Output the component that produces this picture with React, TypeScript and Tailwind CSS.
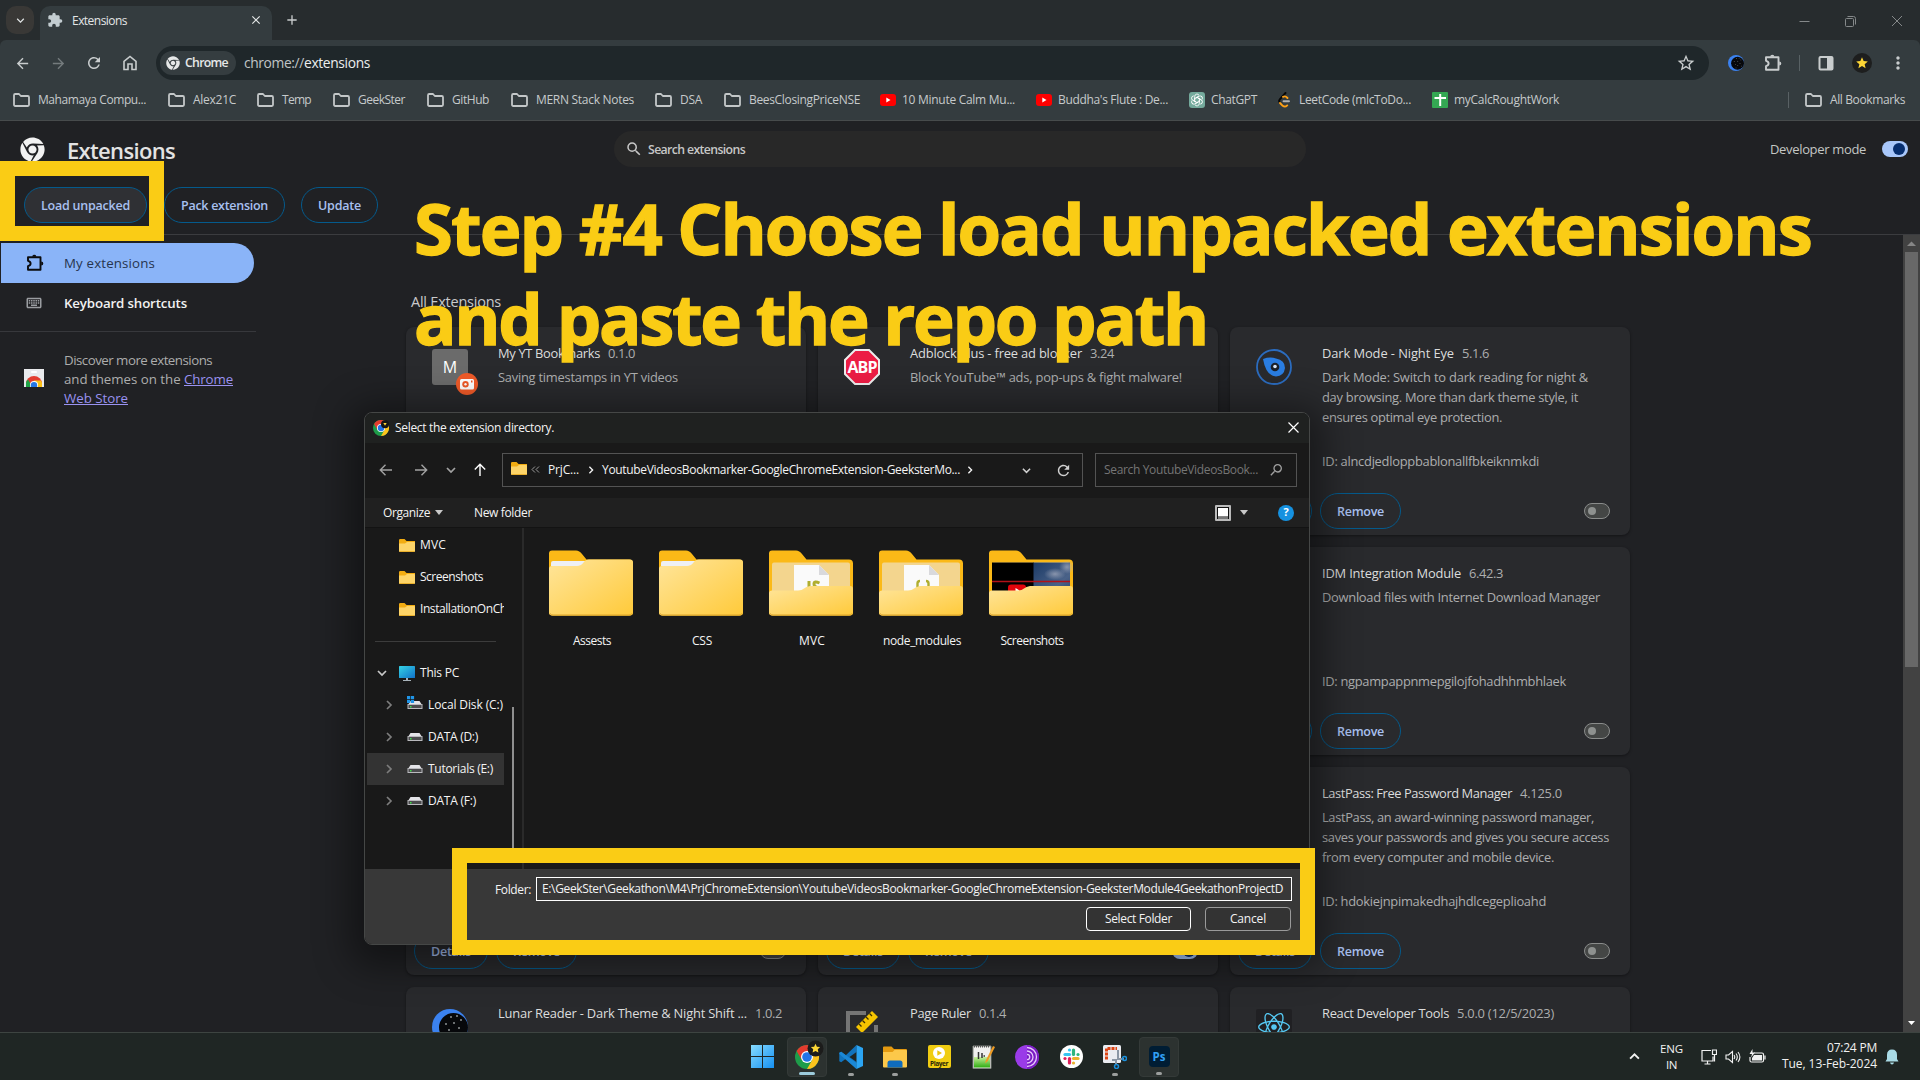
import React, { useLayoutEffect, useRef } from "react";
import {
  MdExtension,
  MdClose,
  MdAdd,
  MdArrowBack,
  MdArrowForward,
  MdRefresh,
  MdStarBorder,
  MdStar,
  MdMoreVert,
  MdSearch,
  MdOutlineKeyboard,
  MdKeyboardArrowDown,
} from "react-icons/md";
import { FaChrome, FaReact } from "react-icons/fa";

/** One line of text whose tracking is adjusted so that it spans `w` pixels. */
function T({ w, className = "", children }: { w?: number; className?: string; children: string }) {
  const ref = useRef<HTMLSpanElement>(null);
  useLayoutEffect(() => {
    const el = ref.current;
    if (!el || !w) return;
    el.style.letterSpacing = "0px";
    const natural = el.offsetWidth ? el.getBoundingClientRect().width : w;
    el.style.letterSpacing = `${(w - natural) / children.length}px`;
  }, [w, children]);
  return (
    <span ref={ref} className={`inline-block shrink-0 whitespace-pre ${className}`}>
      {children}
    </span>
  );
}

/* ---------- small drawings ---------- */

function PuzzleOutline({ className = "" }: { className?: string }) {
  return (
    <svg width="18" height="18" viewBox="0 0 18 18" className={`shrink-0 ${className}`}>
      <path
        d="M2 3.300H14.500V15.700H2V12.200Q4.600 11.500 4.600 9.500T2 6.800z"
        fill="none"
        stroke="currentColor"
        strokeWidth="1.900"
        strokeLinejoin="round"
      />
      <path d="M6.200 2.800a2.100 2.100 0 0 1 4.200 0zM15.200 7.400a2.100 2.100 0 0 1 0 4.200z" fill="currentColor" />
    </svg>
  );
}

function FolderOutline() {
  return (
    <svg width="17" height="14" viewBox="0 0 17 14" className="shrink-0 text-[#c3c7c8]" fill="none" stroke="currentColor" strokeWidth="1.800" strokeLinejoin="round">
      <path d="M1 11.800V2.200Q1 1 2.200 1H6l1.800 2h7q1.200 0 1.200 1.200v7.600q0 1.200-1.200 1.200H2.200Q1 13 1 11.800z" />
    </svg>
  );
}

function YouTubeIcon() {
  return (
    <svg width="16" height="12" viewBox="0 0 16 12" className="shrink-0">
      <rect width="16" height="12" rx="3" fill="#f00" />
      <path d="M6.300 3.500v5l4.200-2.500z" fill="#fff" />
    </svg>
  );
}

function ChatGptIcon() {
  return (
    <svg width="16" height="16" viewBox="0 0 16 16" className="shrink-0" fill="none" stroke="#fff" strokeWidth="0.9">
      <rect width="16" height="16" rx="3" fill="#74aa9c" stroke="none" />
      {[0, 60, 120, 180, 240, 300].map((a) => (
        <path key={a} transform={`rotate(${a} 8 8)`} d="M5.700 8V4.400a2.300 2.300 0 0 1 4.300-1.100M5.700 6.700l3-1.700" />
      ))}
    </svg>
  );
}

function LeetCodeIcon() {
  return (
    <svg width="16" height="16" viewBox="0 0 16 16" className="shrink-0" fill="none" strokeWidth="1.900" strokeLinecap="round">
      <path d="M8.500 1 2.800 7.300Q1.500 9 2.800 10.500" stroke="#070706" />
      <path d="M3 11 5.700 13.800Q8 15.600 10.200 13.400" stroke="#ffa116" />
      <path d="M6 4.800Q8.400 3.600 10.500 6" stroke="#ffa116" />
      <path d="M6.500 9.200H12" stroke="#b3b3b3" />
    </svg>
  );
}

function SheetIcon() {
  return (
    <svg width="16" height="16" viewBox="0 0 16 16" className="shrink-0">
      <rect width="16" height="16" rx="1" fill="#34a853" />
      <path d="M7.200 2h2v3H14v2H9.200v7h-2V7H2.500V5h4.700z" fill="#fff" />
    </svg>
  );
}

function ChromeLogo({ size, badge }: { size: number; badge?: "star" | "dot" }) {
  return (
    <svg width={size} height={size} viewBox="0 0 24 24" className="shrink-0 overflow-visible">
      <circle cx="12" cy="12" r="12" fill="#1e9c4a" />
      <path d="M1.600 6A12 12 0 0 1 22.400 6H12L6.800 15z" fill="#e33b2e" />
      <path d="M22.400 6A12 12 0 0 1 12 24L17.200 15 12 6z" fill="#fcc31c" />
      <circle cx="12" cy="12" r="6" fill="#fff" />
      <circle cx="12" cy="12" r="4.800" fill="#2374e8" />
      {badge === "star" && (
        <>
          <circle cx="20.500" cy="3.500" r="8" fill="#1c1c1b" />
          <path d="m20.500-1.200 1.400 2.900 3.200.4-2.300 2.200.6 3.200-2.900-1.600-2.900 1.600.6-3.200-2.300-2.200 3.200-.4z" fill="#fcd535" />
        </>
      )}
      {badge === "dot" && (
        <>
          <circle cx="18" cy="6.500" r="6" fill="#151515" />
          <path d="M15.500 4.500h5L18 8.500z" fill="#fcd535" />
        </>
      )}
    </svg>
  );
}

function LunarIcon({ size }: { size: number }) {
  return (
    <svg width={size} height={size} viewBox="0 0 36 36" className="shrink-0">
      <circle cx="18" cy="18" r="18" fill="#3b82f0" />
      <circle cx="21.500" cy="18.500" r="14.500" fill="#07080b" />
      <g fill="#8d9093">
        <circle cx="19" cy="8" r="1" /><circle cx="25" cy="7" r="1" /><circle cx="29" cy="11" r="1" />
        <circle cx="22" cy="14" r="1" /><circle cx="14" cy="15" r="1" /><circle cx="27" cy="19" r="1" />
        <circle cx="17" cy="21" r="1" /><circle cx="22" cy="24" r="1" /><circle cx="30" cy="25" r="1" /><circle cx="18" cy="29" r="1" />
      </g>
    </svg>
  );
}

function SmallFolder() {
  return (
    <svg width="16" height="13" viewBox="0 0 16 13" className="shrink-0">
      <path d="M0 1.200Q0 0 1.200 0H5.500L7.500 2H16V6H0z" fill="#f2ac12" />
      <path d="M0 4.500H6L8 3H15q1 0 1 1v8q0 1-1 1H1q-1 0-1-1z" fill="#fdd468" />
      <path d="M.5 12.500h15" stroke="#eab02c" />
    </svg>
  );
}

type Inner = "none" | "js" | "braces" | "shot";

function BigFolder({ inner }: { inner: Inner }) {
  return (
    <svg width="84" height="66" viewBox="0 0 84 66" className="shrink-0">
      <defs>
        <linearGradient id="front" x1="0" y1="0" x2="1" y2="1">
          <stop offset="0" stopColor="#ffe59b" />
          <stop offset="1" stopColor="#ffca3a" />
        </linearGradient>
        <linearGradient id="sky" x1="0" y1="0" x2="1" y2="1">
          <stop offset="0" stopColor="#1b3a66" />
          <stop offset=".7" stopColor="#4a6288" />
          <stop offset="1" stopColor="#324a72" />
        </linearGradient>
        <radialGradient id="cloud">
          <stop offset="0" stopColor="#a9afc0" stopOpacity=".7" />
          <stop offset="1" stopColor="#a9afc0" stopOpacity="0" />
        </radialGradient>
      </defs>
      <path d="M0 3.500Q0 .5 3 .5H27Q30.500.5 33 4L37.500 9.500H80q4 0 4 4V62q0 3.500-3.500 3.500h-77Q0 65.500 0 62z" fill="#fbb917" />
      {inner === "none" ? (
        <>
          <path d="M2 13q0-2 2-2H37q-2.500 5-7 5H2z" fill="#eef0f4" />
          <path d="M0 19q0-3 3-3H28Q32 16 34.500 12.500 36.500 9.500 40 9.500H81q3 0 3 3V62q0 3.500-3.500 3.500h-77Q0 65.500 0 62z" fill="url(#front)" />
        </>
      ) : (
        <>
          <rect x="3" y="12.500" width="78" height="40" rx="2" fill="#f3d58e" />
          {inner !== "shot" ? (
            <>
              <path d="M25 15H50L60 25V45H25z" fill="#fafafa" />
              <path d="M50 15V25H60z" fill="#d9d9dc" />
              <g fill="none" stroke="#b0ae2f" strokeWidth="3">
                {inner === "js" ? (
                  <path d="M40 31v8M50.500 33Q45 30.500 45 34T50 37.500" />
                ) : (
                  <path d="M41 31Q38.500 31 38.500 33.500V38M47 31Q49.500 31 49.500 33.500V38" strokeWidth="2.400" />
                )}
              </g>
            </>
          ) : (
            <>
              <rect x="3" y="12.500" width="42" height="30" fill="#000" />
              <rect x="44.500" y="12.500" width="36.500" height="30" fill="url(#sky)" />
              <ellipse cx="66" cy="24" rx="11" ry="6" fill="url(#cloud)" />
              <ellipse cx="78" cy="17" rx="8" ry="7" fill="url(#cloud)" />
              <path d="M3 31.500h78" stroke="#b01218" strokeWidth="1.600" />
              <rect x="19" y="34.500" width="18" height="9" rx="3" fill="#e3040c" />
              <path d="M26.500 38v5l4-2.500z" fill="#fff" />
            </>
          )}
          <path d="M0 43.500q0-3 3-3H29Q33 40.500 35 38.500T41 36H81q3 0 3 3V62q0 3.500-3.500 3.500h-77Q0 65.500 0 62z" fill="url(#front)" />
        </>
      )}
      <path d="M1 63.500Q2 65 4 65H80Q82 65 83 63.500" fill="none" stroke="#dca52b" />
    </svg>
  );
}

function Drive({ windows = false }: { windows?: boolean }) {
  return (
    <svg width="16" height="14" viewBox="0 0 16 14" className="shrink-0">
      <path d="M3.500 5H12.500L15 9H1z" fill="#e4e4e8" />
      <rect x="1" y="8.500" width="14" height="4" fill="#4c4c4e" stroke="#b9b9bd" />
      <rect x="3" y="10" width="1.500" height="1.500" fill="#3fe04a" />
      {windows && <path d="M0 0h3.200v3.200H0zM3.900 0h3.200v3.200H3.900zM0 3.900h3.200v3.200H0zM3.900 3.900h3.200v3.200H3.900z" fill="#1f95e8" />}
    </svg>
  );
}

function Chevron({ dir, size = 10, className = "" }: { dir: "down" | "right" | "up"; size?: number; className?: string }) {
  return (
    <svg width={size} height={size} viewBox="0 0 10 10" className={`shrink-0 ${className}`} fill="none" stroke="currentColor" strokeWidth="1.700">
      {dir === "down" && <path d="M1 3l4 4 4-4" />}
      {dir === "right" && <path d="M3 1l4 4-4 4" />}
      {dir === "up" && <path d="M1 7l4-4 4 4" />}
    </svg>
  );
}

function ThinArrow({ className = "" }: { className?: string }) {
  return (
    <svg width="14" height="14" viewBox="0 0 14 14" className={`shrink-0 ${className}`} fill="none" stroke="currentColor" strokeWidth="1.400">
      <path d="M13 7H1.500M6.500 1.800 1.300 7l5.200 5.200" />
    </svg>
  );
}

/* ---------- browser chrome ---------- */

function TabStrip() {
  return (
    <div className="flex h-10 shrink-0 items-start bg-[#272c2e]">
      <div className="ml-1.5 mt-1.5 flex h-7 w-7 items-center justify-center rounded-[10px] bg-[#393836] text-[#dfe2e3]">
        <MdKeyboardArrowDown size={15} />
      </div>
      <div className="ml-1.5 mt-1.5 flex h-[34px] w-[232px] items-center rounded-t-[10px] bg-[#343c3f] pb-1.5 text-[#e3e6e7]">
        <MdExtension size={16} className="ml-[7px] text-[#c3cdd1]" />
        <T w={55} className="ml-[9px] mt-px text-[12px]">Extensions</T>
        <MdClose size={14} className="ml-[122px]" />
      </div>
      <MdAdd size={16} className="ml-3 mt-3 text-[#c9cccd]" />
      <div className="ml-auto mt-[15px] flex items-center gap-[35px] pr-[17px] text-[#85898a]">
        <svg width="11" height="11" stroke="currentColor"><path d="M.5 5.500h10" /></svg>
        <svg width="11" height="11" fill="none" stroke="currentColor">
          <rect x=".5" y="2.500" width="8" height="8" rx="1" />
          <path d="M2.500.5h6q2 0 2 2v6" />
        </svg>
        <svg width="12" height="12" stroke="currentColor"><path d="M1 1l10 10M11 1 1 11" /></svg>
      </div>
    </div>
  );
}

function Toolbar() {
  return (
    <div className="flex h-[46px] shrink-0 items-center rounded-t-[6px] bg-[#343c3f] text-[#c9cdce]">
      <div className="flex w-[156px] items-center gap-[19px] pl-3.5">
        <MdArrowBack size={17} />
        <MdArrowForward size={17} className="text-[#747b7d]" />
        <MdRefresh size={18} className="-ml-px" />
        <svg width="16" height="16" viewBox="0 0 16 16" fill="none" stroke="currentColor" strokeWidth="1.600">
          <path d="M2 14.500V6.300L8 1.500l6 4.800v8.200H10V9H6v5.500z" />
        </svg>
      </div>
      <div className="flex h-[34px] w-[1553px] items-center rounded-full bg-[#1f272a] pl-1">
        <div className="flex h-6 w-[76px] items-center rounded-full bg-[#353d40] pl-1.5 text-[#e6e8e8]">
          <FaChrome size={14} />
          <T w={43} className="ml-[5px] text-[12.300px] font-semibold">Chrome</T>
        </div>
        <div className="ml-2 mt-px text-[13.800px]">
          <T w={60} className="text-[#c0c5c6]">chrome://</T>
          <T w={66} className="text-[#eceeee]">extensions</T>
        </div>
        <MdStarBorder size={20} className="ml-auto mr-[13px]" />
      </div>
      <div className="flex flex-1 items-center pl-[19px]">
        <LunarIcon size={16} />
        <PuzzleOutline className="ml-5" />
        <div className="ml-[17px] h-4 w-px bg-[#586164]" />
        <svg width="16" height="16" viewBox="0 0 16 16" className="ml-[18px]" fill="none" stroke="currentColor" strokeWidth="2">
          <rect x="1.500" y="2" width="13" height="12.500" rx="1" />
          <path d="M9 3h5v11H9z" fill="currentColor" stroke="none" />
        </svg>
        <div className="ml-[18px] flex h-5 w-5 items-center justify-center rounded-full bg-[#1d1e1e] text-[#fcd535]">
          <MdStar size={14} />
        </div>
        <MdMoreVert size={20} className="ml-4" />
      </div>
    </div>
  );
}

type Mark = { icon: "folder" | "yt" | "gpt" | "lc" | "sheet"; label: string; w: number; box: string };

const bookmarks: Mark[] = [
  { icon: "folder", label: "Mahamaya Compu...", w: 108, box: "w-[155px]" },
  { icon: "folder", label: "Alex21C", w: 43, box: "w-[89px]" },
  { icon: "folder", label: "Temp", w: 29, box: "w-[76px]" },
  { icon: "folder", label: "GeekSter", w: 47, box: "w-[94px]" },
  { icon: "folder", label: "GitHub", w: 37, box: "w-[84px]" },
  { icon: "folder", label: "MERN Stack Notes", w: 98, box: "w-[144px]" },
  { icon: "folder", label: "DSA", w: 22, box: "w-[69px]" },
  { icon: "folder", label: "BeesClosingPriceNSE", w: 111, box: "w-[156px]" },
  { icon: "yt", label: "10 Minute Calm Mu...", w: 113, box: "w-[156px]" },
  { icon: "yt", label: "Buddha's Flute : De...", w: 110, box: "w-[153px]" },
  { icon: "gpt", label: "ChatGPT", w: 46, box: "w-[88px]" },
  { icon: "lc", label: "LeetCode (mlcToDo...", w: 112, box: "w-[155px]" },
  { icon: "sheet", label: "myCalcRoughtWork", w: 105, box: "w-[140px]" },
];

function BookmarkBar() {
  return (
    <div className="flex h-[35px] shrink-0 items-center border-b border-[#474b4c] bg-[#343c3f] pb-[7px] pl-[13px] text-[12px] text-[#c6cacb]">
      {bookmarks.map((b) => (
        <div key={b.label} className={`flex shrink-0 items-center ${b.box} ${b.icon === "folder" ? "gap-2" : "gap-1.5"}`}>
          {b.icon === "folder" && <FolderOutline />}
          {b.icon === "yt" && <YouTubeIcon />}
          {b.icon === "gpt" && <ChatGptIcon />}
          {b.icon === "lc" && <LeetCodeIcon />}
          {b.icon === "sheet" && <SheetIcon />}
          <T w={b.w}>{b.label}</T>
        </div>
      ))}
      <div className="ml-auto mr-4 h-4 w-px bg-[#596164]" />
      <FolderOutline />
      <T w={75} className="ml-2 mr-[15px]">All Bookmarks</T>
    </div>
  );
}

/* ---------- extensions page ---------- */

function Pill({ label, w, box }: { label: string; w: number; box: string }) {
  return (
    <div className={`flex h-9 shrink-0 items-center justify-center rounded-full border border-[#045a8c] text-[12.500px] font-semibold text-[#a8c0f0] ${box}`}>
      <T w={w} className="mt-[3px]">{label}</T>
    </div>
  );
}

function PageHeader() {
  return (
    <div className="h-[114px] shrink-0 border-b border-[#3b3c3f]">
      <div className="flex h-14 items-center">
        <FaChrome size={25} className="ml-5 text-[#f2f2f2]" />
        <T w={108} className="ml-[22px] mt-0.5 text-[22px] font-semibold text-[#e3e3e3]">Extensions</T>
        <div className="ml-[439px] flex h-9 w-[692px] items-center rounded-full bg-[#282828] pl-[11px] text-[#c7c7c7]">
          <MdSearch size={18} />
          <T w={97} className="ml-[5px] mt-[3px] text-[12.300px] font-semibold">Search extensions</T>
        </div>
        <T w={96} className="ml-auto mt-px text-[13px] text-[#c4c7c5]">Developer mode</T>
        <div className="ml-4 mr-3 flex h-4 w-[26px] items-center justify-end rounded-full bg-[#a8c7fa] pr-[3px]">
          <div className="h-3 w-3 rounded-full bg-[#062e6f]" />
        </div>
      </div>
      <div className="flex pl-6 pt-2.5">
        <Pill label="Load unpacked" w={89} box="w-[123px] bg-[#2f3034]" />
        <Pill label="Pack extension" w={87} box="ml-[17px] w-[121px]" />
        <Pill label="Update" w={43} box="ml-4 w-[77px]" />
      </div>
    </div>
  );
}

function Sidebar() {
  return (
    <div className="w-[406px] shrink-0 text-[13.300px]">
      <div className="ml-px mt-2 flex h-10 w-[253px] items-center rounded-r-full bg-[#8ab4f8] pl-[25px] text-[#26354f]">
        <PuzzleOutline className="text-[#0b0c0e]" />
        <T w={91} className="ml-5 mt-px">My extensions</T>
      </div>
      <div className="flex h-10 items-center pl-[25px] text-[#f1f1f1]">
        <MdOutlineKeyboard size={18} className="text-[#9a9da1]" />
        <T w={123} className="ml-[21px] mt-px font-semibold">Keyboard shortcuts</T>
      </div>
      <div className="mt-2 h-px w-64 bg-[#37383c]" />
      <div className="flex items-center pl-6 pt-[19px] text-[#adadad]">
        <svg width="20" height="18" viewBox="0 0 20 18" className="-mt-1 shrink-0">
          <path d="M0 0h20v18H0z" fill="#e9eaed" />
          <rect x="7" y="2" width="6" height="2" rx="1" fill="#fff" />
          <path d="M2 18V14.500a8 7.500 0 0 1 16 0V18z" fill="#e23c30" />
          <path d="M2 18V13.500Q2.500 11.500 4 10.500l4.500 7.500z" fill="#1ea446" />
          <path d="M18 18V14.500Q18 13 17 11.500H10L8 14l4 4z" fill="#fbc116" />
          <circle cx="10" cy="16" r="4" fill="#fff" />
          <circle cx="10" cy="16.300" r="3.200" fill="#2577e6" />
        </svg>
        <div className="ml-5 flex flex-col leading-[19px]">
          <T w={158}>Discover more extensions</T>
          <div className="flex">
            <T w={120}>and themes on the </T>
            <T w={49} className="text-[#9a92f0] underline">Chrome</T>
          </div>
          <T w={64} className="self-start text-[#9a92f0] underline">Web Store</T>
        </div>
      </div>
    </div>
  );
}

type Ext = {
  title: string;
  tw: number;
  version: string;
  vw: number;
  desc?: [string, number][];
  id?: [string, number];
  icon?: React.ReactNode;
  on?: boolean;
};

const ytBookmarksIcon = (
  <div className="relative flex h-9 w-9 items-center justify-center rounded-[3px] bg-[#6b6b6b] text-[16px] text-white">
    M
    <div className="absolute -bottom-[10px] -right-[10px] flex h-[22px] w-[22px] items-center justify-center rounded-full bg-[#ef5a28]">
      <svg width="14" height="11" viewBox="0 0 14 11">
        <rect width="14" height="10.500" rx="1.500" fill="#fff" />
        <circle cx="5.500" cy="5.200" r="3.200" fill="#ef5a28" />
        <circle cx="5.500" cy="5.200" r="1.200" fill="#fff" />
        <rect x="11" y="1.500" width="1.500" height="2" fill="#ef5a28" />
      </svg>
    </div>
  </div>
);

const abpIcon = (
  <div className="relative flex h-9 w-9 items-center justify-center">
    <svg width="36" height="36" viewBox="0 0 36 36" className="absolute inset-0">
      <path d="M11 1H25L35 11V25L25 35H11L1 25V11z" fill="#ec1c44" stroke="#ededed" strokeWidth="2" />
    </svg>
    <T w={29} className="relative text-[16px] font-bold text-white">ABP</T>
  </div>
);

const nightEyeIcon = (
  <svg width="36" height="36" viewBox="0 0 36 36">
    <circle cx="18" cy="18" r="17" fill="none" stroke="#2b6cbf" strokeWidth="1.800" />
    <path d="M7 10Q14 7.500 20 9.500 29 11 29 19 28 27 20 27.500 10 27 7 10z" fill="#2a7de1" />
    <circle cx="19" cy="18" r="4.300" fill="#1c2128" />
    <circle cx="19" cy="17.500" r="1.800" fill="#d9e7f7" />
  </svg>
);

const rulerIcon = (
  <svg width="36" height="36" viewBox="0 0 36 36">
    <path d="M22 4H4V34H32V16" fill="none" stroke="#757575" strokeWidth="4" />
    <path d="M12 18 28 2l6 6-16 16z" fill="#f5c400" />
    <path d="M15 15l2.500 2.500M18.500 11.500 21 14M22 8l2.500 2.500M25.500 4.500 28 7" stroke="#3a3000" strokeWidth="1.300" />
  </svg>
);

const reactIcon = (
  <div className="flex h-9 w-9 items-center justify-center rounded-[2px] bg-[#202023] text-[#55c8f2]">
    <FaReact size={32} />
  </div>
);

const blank: Ext = { title: "", tw: 0, version: "", vw: 0 };

const extensions: Ext[] = [
  { title: "My YT Bookmarks", tw: 102, version: "0.1.0", vw: 27, desc: [["Saving timestamps in YT videos", 180]], icon: ytBookmarksIcon },
  { title: "Adblock Plus - free ad blocker", tw: 172, version: "3.24", vw: 24, desc: [["Block YouTube™ ads, pop-ups & fight malware!", 272]], icon: abpIcon },
  {
    title: "Dark Mode - Night Eye",
    tw: 132,
    version: "5.1.6",
    vw: 27,
    desc: [
      ["Dark Mode: Switch to dark reading for night &", 266],
      ["day browsing. More than dark theme style, it", 256],
      ["ensures optimal eye protection.", 180],
    ],
    id: ["ID: alncdjedloppbablonallfbkeiknmkdi", 217],
    icon: nightEyeIcon,
  },
  blank,
  blank,
  {
    title: "IDM Integration Module",
    tw: 139,
    version: "6.42.3",
    vw: 34,
    desc: [["Download files with Internet Download Manager", 278]],
    id: ["ID: ngpampappnmepgilojfohadhhmbhlaek", 244],
  },
  blank,
  { ...blank, on: true },
  {
    title: "LastPass: Free Password Manager",
    tw: 190,
    version: "4.125.0",
    vw: 42,
    desc: [
      ["LastPass, an award-winning password manager,", 272],
      ["saves your passwords and gives you secure access", 287],
      ["from every computer and mobile device.", 232],
    ],
    id: ["ID: hdokiejnpimakedhajhdlcegeplioahd", 224],
  },
  { title: "Lunar Reader - Dark Theme & Night Shift ...", tw: 249, version: "1.0.2", vw: 27, icon: <LunarIcon size={36} /> },
  { title: "Page Ruler", tw: 61, version: "0.1.4", vw: 27, icon: rulerIcon },
  { title: "React Developer Tools", tw: 127, version: "5.0.0 (12/5/2023)", vw: 97, icon: reactIcon },
];

function CardActions({ on }: { on?: boolean }) {
  return (
    <div className="flex items-center pl-2 pr-5">
      <Pill label="Details" w={40} box="w-[74px]" />
      <Pill label="Remove" w={47} box="ml-2 w-[81px]" />
      {on ? (
        <div className="ml-auto flex h-4 w-[26px] items-center justify-end rounded-full bg-[#a8c7fa] pr-[3px]">
          <div className="h-3 w-3 rounded-full bg-[#062e6f]" />
        </div>
      ) : (
        <div className="ml-auto flex h-4 w-[26px] items-center rounded-full border border-[#8a8c8b] bg-[#444645] pl-[3px]">
          <div className="h-2 w-2 rounded-full bg-[#8e918f]" />
        </div>
      )}
    </div>
  );
}

function Card({ ext, row }: { ext: Ext; row: number }) {
  return (
    <div className="flex h-52 flex-col rounded-lg bg-[#292a2d] text-[12.900px] text-[#adaeaf] shadow-[0_1px_3px_rgba(0,0,0,0.4)]">
      <div className="flex h-[124px] pl-[26px] pt-[22px]">
        <div className="w-[66px] shrink-0">{ext.icon}</div>
        <div className="-mt-1.5 flex flex-col leading-5">
          {ext.title && (
            <div className="flex gap-2">
              <T w={ext.tw} className="font-medium text-[#dcdddd]">{ext.title}</T>
              <T w={ext.vw}>{ext.version}</T>
            </div>
          )}
          <div className="mt-1 flex flex-col items-start">
            {ext.desc?.map(([line, w]) => <T key={line} w={w}>{line}</T>)}
          </div>
        </div>
      </div>
      <div className="h-[42px] pl-[92px] leading-5">{ext.id && <T w={ext.id[1]}>{ext.id[0]}</T>}</div>
      {row < 3 && <CardActions on={ext.on} />}
    </div>
  );
}

function ExtensionsPage() {
  return (
    <div className="flex min-h-0 flex-1 flex-col bg-[#202124]">
      <PageHeader />
      <div className="flex min-h-0 flex-1 overflow-hidden">
        <Sidebar />
        <div className="w-[1224px] shrink-0">
          <div className="flex h-[92px] items-end pb-3.5 pl-[5px] text-[14.500px] text-[#c9cacb]">
            <T w={90}>All Extensions</T>
          </div>
          <div className="grid grid-cols-3 gap-3">
            {extensions.map((e, i) => <Card key={i} ext={e} row={Math.floor(i / 3)} />)}
          </div>
        </div>
        <div className="ml-auto flex w-[17px] flex-col items-center bg-[#424242]">
          <svg width="9" height="17" viewBox="0 0 9 17"><path d="M0 11h9L4.500 6.500z" fill="#868686" /></svg>
          <div className="h-[415px] w-[13px] bg-[#686868]" />
          <svg width="7" height="17" viewBox="0 0 7 17" className="mt-auto"><path d="M0 6h7L3.500 10z" fill="#fff" /></svg>
        </div>
      </div>
    </div>
  );
}

/* ---------- folder picker ---------- */

function TreeFolder({ label, w }: { label: string; w: number }) {
  return (
    <div className="flex h-8 w-[139px] items-center gap-[5px] overflow-hidden pl-[34px]">
      <SmallFolder />
      <T w={w}>{label}</T>
    </div>
  );
}

function TreeDrive({ label, w, windows, selected }: { label: string; w: number; windows?: boolean; selected?: boolean }) {
  return (
    <div className={`ml-0.5 flex h-8 w-[137px] items-center pl-[17px] ${selected ? "bg-[#333333]" : ""}`}>
      <Chevron dir="right" className="text-[#7d7d7d]" />
      <span className="mb-1 ml-[13px]"><Drive windows={windows} /></span>
      <T w={w} className="ml-[5px]">{label}</T>
    </div>
  );
}

const folders: { name: string; w: number; inner: Inner }[] = [
  { name: "Assests", w: 38, inner: "none" },
  { name: "CSS", w: 20, inner: "none" },
  { name: "MVC", w: 26, inner: "js" },
  { name: "node_modules", w: 78, inner: "braces" },
  { name: "Screenshots", w: 63, inner: "shot" },
];

function Caret() {
  return <svg width="8" height="5" viewBox="0 0 8 5"><path d="M0 0h8L4 5z" fill="#c9c9c9" /></svg>;
}

function FolderDialog() {
  return (
    <div className="absolute left-[364px] top-[412px] flex h-[533px] w-[946px] flex-col overflow-hidden rounded-lg border border-[#454746] bg-[#191919] text-[12px] text-[#f4f4f4] shadow-[0_8px_36px_14px_rgba(0,0,0,0.42)]">
      <div className="flex h-[30px] shrink-0 items-center bg-[#1f2120] pl-2">
        <ChromeLogo size={16} badge="dot" />
        <T w={159} className="ml-1.5">Select the extension directory.</T>
        <svg width="11" height="11" className="-mt-0.5 ml-auto mr-[10px]" stroke="#fff" strokeWidth="1.200"><path d="M.5.5l10 10M10.500.5l-10 10" /></svg>
      </div>

      <div className="flex h-[55px] shrink-0 items-center pb-0.5">
        <ThinArrow className="ml-[14px] text-[#a3a3a3]" />
        <ThinArrow className="ml-[21px] rotate-180 text-[#a3a3a3]" />
        <Chevron dir="down" className="ml-[18px] text-[#a3a3a3]" />
        <ThinArrow className="ml-[17px] rotate-90 text-white" />
        <div className="ml-[15px] flex h-[34px] w-[581px] items-center border border-[#535353] pl-2">
          <span className="-mt-0.5"><SmallFolder /></span>
          <svg width="9" height="7" viewBox="0 0 9 7" className="ml-1" fill="none" stroke="#9a9a9a"><path d="M4 .5l-3 3 3 3M8 .5l-3 3 3 3" /></svg>
          <T w={31} className="ml-2">PrjC...</T>
          <Chevron dir="right" size={8} className="ml-2" />
          <T w={358} className="ml-[7px]">YoutubeVideosBookmarker-GoogleChromeExtension-GeeksterMo...</T>
          <Chevron dir="right" size={8} className="ml-1.5" />
          <Chevron dir="down" size={9} className="ml-auto mr-6 mt-0.5 text-[#d0d0d0]" />
          <MdRefresh size={17} className="mr-[10px] mt-0.5 text-[#d0d0d0]" />
        </div>
        <div className="ml-3 flex h-[34px] w-[202px] items-center border border-[#535353] pl-2 text-[#757575]">
          <T w={154}>Search YoutubeVideosBook...</T>
          <MdSearch size={16} className="ml-[10px] -scale-x-100 text-[#a0a0a0]" />
        </div>
      </div>

      <div className="flex h-[30px] shrink-0 items-center border-b border-[#131313] bg-[#202020] pl-[18px]">
        <T w={47}>Organize</T>
        <span className="ml-[5px]"><Caret /></span>
        <T w={58} className="ml-[31px]">New folder</T>
        <svg width="16" height="16" viewBox="0 0 16 16" className="ml-auto">
          <rect width="16" height="16" rx="1" fill="#bababa" />
          <path d="M2 2h12v12H2z" fill="#111" />
          <path d="M3 3h10v8.500H3z" fill="#fff" />
          <path d="M3 13h10" stroke="#ddd" />
        </svg>
        <span className="ml-[9px]"><Caret /></span>
        <div className="ml-[30px] mr-[15px] flex h-4 w-4 items-center justify-center rounded-full bg-[#1591e0] text-[11px] font-bold text-white">?</div>
      </div>

      <div className="flex min-h-0 flex-1">
        <div className="w-[139px] shrink-0 pt-px">
          <TreeFolder label="MVC" w={26} />
          <TreeFolder label="Screenshots" w={63} />
          <TreeFolder label="InstallationOnChrome" w={115} />
          <div className="flex h-8 items-center pl-2.5"><div className="h-px w-[121px] bg-[#3c3c3c]" /></div>
          <div className="flex h-8 items-center pl-3">
            <Chevron dir="down" className="text-[#c8c8c8]" />
            <svg width="16" height="16" viewBox="0 0 16 16" className="ml-3">
              <defs><linearGradient id="pc" x1="0" y1="0" x2="1" y2="1"><stop offset="0" stopColor="#35d3e6" /><stop offset="1" stopColor="#1071c8" /></linearGradient></defs>
              <rect y="1" width="16" height="12" rx=".6" fill="url(#pc)" />
              <path d="M7 13h2v2h3v1H4v-1h3z" fill="#a9b4bb" />
            </svg>
            <T w={39} className="ml-[5px]">This PC</T>
          </div>
          <TreeDrive label="Local Disk (C:)" w={75} windows />
          <TreeDrive label="DATA (D:)" w={50} />
          <TreeDrive label="Tutorials (E:)" w={65} selected />
          <TreeDrive label="DATA (F:)" w={48} />
        </div>
        <div className="flex w-[20px] shrink-0 justify-center border-r-2 border-[#2a2a2a] pt-[179px]">
          <div className="h-[145px] w-0.5 bg-[#8f8f8f]" />
        </div>
        <div className="flex pl-[12px] pt-[22px]">
          {folders.map((f) => (
            <div key={f.name} className="flex w-[110px] flex-col items-center">
              <BigFolder inner={f.inner} />
              <T w={f.w} className="ml-0.5 mt-4">{f.name}</T>
            </div>
          ))}
        </div>
      </div>

      <div className="h-[75px] shrink-0 bg-[#383838] pt-2">
        <div className="flex h-6 items-center">
          <T w={36} className="ml-[130px] mt-px">Folder:</T>
          <div className="ml-[5px] flex h-6 w-[756px] items-center border border-white pl-[5px]">
            <T w={741}>E:\GeekSter\Geekathon\M4\PrjChromeExtension\YoutubeVideosBookmarker-GoogleChromeExtension-GeeksterModule4GeekathonProjectD</T>
          </div>
        </div>
        <div className="mt-1.5 flex justify-end pr-[18px]">
          <div className="flex h-6 w-[105px] items-center justify-center rounded border border-white bg-[#333333]"><T w={67}>Select Folder</T></div>
          <div className="ml-3.5 flex h-6 w-[86px] items-center justify-center rounded border border-[#9a9a9a] bg-[#333333]"><T w={36}>Cancel</T></div>
        </div>
      </div>
    </div>
  );
}

/* ---------- taskbar ---------- */

function Task({ children, mark, lit }: { children: React.ReactNode; mark?: "active" | "open"; lit?: boolean }) {
  return (
    <div className={`relative flex h-10 w-10 items-center justify-center rounded ${lit ? "border border-[#343a38] bg-[#2c3230]" : ""}`}>
      {children}
      {mark === "active" && <div className="absolute bottom-px h-[3px] w-4 rounded-full bg-[#9ccbdc]" />}
      {mark === "open" && <div className="absolute bottom-px h-[3px] w-1.5 rounded-full bg-[#9b9e9d]" />}
    </div>
  );
}

function Taskbar() {
  return (
    <div className="flex h-12 shrink-0 items-center border-t border-[#3d4441] bg-[#1f2624] text-[12px] text-[#f1f1f1]">
      <div className="ml-[743px] flex gap-1">
        <Task>
          <svg width="23" height="23" viewBox="0 0 23 23" className="-ml-px">
            <defs><linearGradient id="win" x1="0" y1="0" x2="1" y2="1"><stop offset="0" stopColor="#86dcff" /><stop offset="1" stopColor="#1590f2" /></linearGradient></defs>
            <path d="M0 0h11v11H0zM12 0h11v11H12zM0 12h11v11H0zM12 12h11v11H12z" fill="url(#win)" />
          </svg>
        </Task>
        <Task lit mark="active"><ChromeLogo size={24} badge="star" /></Task>
        <Task mark="open">
          <svg width="24" height="24" viewBox="0 0 24 24">
            <path d="M17.500 0 6.800 10.200 2.200 6.700.3 7.700v8.600l1.900 1L6.800 13.800 17.500 24V17L10.500 12l7-5z" fill="#1173bd" />
            <path d="M.3 7.700 2.200 6.700 17.500 18v6L.3 9z" fill="#1b88d6" />
            <path d="M17.500 0 24 3v18l-6.500 3z" fill="#2ba5f3" />
          </svg>
        </Task>
        <Task mark="open">
          <svg width="24" height="22" viewBox="0 0 24 22">
            <path d="M0 1.500Q0 .5 1 .5H8.500L11 3H23q1 0 1 1v5H0z" fill="#e49a10" />
            <path d="M0 6H9.500L11.500 4H23q1 0 1 1V20.500q0 1-1 1H1q-1 0-1-1z" fill="#fcc84a" />
            <path d="M4.500 21.500V17q0-2.500 2.500-2.500H17q2.500 0 2.500 2.500v4.500z" fill="#0f6cbd" />
          </svg>
        </Task>
        <Task>
          <div className="flex h-[23px] w-[23px] flex-col items-center rounded-[2px] bg-[#f0cd12] pt-0.5">
            <svg width="12" height="12" viewBox="0 0 12 12" className="shrink-0"><circle cx="6" cy="6" r="6" fill="#fff" /><path d="M4.300 3.300v5.400L9 6z" fill="#ecc50f" /></svg>
            <T w={18} className="mt-px text-[6.500px] font-bold leading-[7px] text-[#2b2607]">Player</T>
          </div>
        </Task>
        <Task>
          <svg width="24" height="24" viewBox="0 0 24 24">
            <defs><linearGradient id="pad" x1="0" y1="0" x2="0" y2="1"><stop offset="0" stopColor="#c8f09c" /><stop offset="1" stopColor="#2fae12" /></linearGradient></defs>
            <path d="M2 1H20V23.500H2z" fill="#f0f0ee" stroke="#80857f" />
            <path d="M3 12h16v10.500H3z" fill="url(#pad)" />
            <path d="M3 1.500h16" stroke="#555" strokeDasharray="1 1" strokeWidth="2" />
            <path d="M7.500 7v7M11 8v5M12.500 11h1.500" stroke="#333" strokeWidth="1.500" />
            <path d="M22 1 15 15l-1 3.500 2.800-2.500L24 2z" fill="#ee9c25" />
          </svg>
        </Task>
        <Task>
          <svg width="24" height="24" viewBox="0 0 24 24" fill="none" stroke="#e6c9fb">
            <circle cx="12" cy="12" r="12" fill="#9a3be8" stroke="none" />
            <path d="M12 0a12 12 0 0 1 0 24z" fill="#7a1cc4" stroke="none" />
            <path d="M12 2.500a9.500 9.500 0 0 1 0 19M12 6a6 6 0 0 1 0 12M12 9.300a2.700 2.700 0 0 1 0 5.400" strokeWidth="1.300" />
          </svg>
        </Task>
        <Task>
          <svg width="23" height="23" viewBox="0 0 23 23">
            <circle cx="11.500" cy="11.500" r="11.500" fill="#fff" />
            <g strokeWidth="3.200" strokeLinecap="round" fill="none">
              <path d="M5 9.500h4.500" stroke="#36c5f0" /><path d="M9.500 5h.01" stroke="#36c5f0" />
              <path d="M13.500 5v4.500" stroke="#2eb67d" /><path d="M18 9.500h.01" stroke="#2eb67d" />
              <path d="M13.500 13.500H18" stroke="#ecb22e" /><path d="M13.500 18h.01" stroke="#ecb22e" />
              <path d="M9.500 13.500V18" stroke="#e01e5a" /><path d="M5 13.500h.01" stroke="#e01e5a" />
            </g>
          </svg>
        </Task>
        <Task mark="open">
          <svg width="24" height="24" viewBox="0 0 24 24" fill="none">
            <rect width="18" height="18" rx="1.500" fill="#eaecf1" />
            <path d="M3.500 14.500V3.500H14" stroke="#dc4414" strokeWidth="3" strokeDasharray="3 1" />
            <path d="M15 5V14h6M13 19v-4H9" stroke="#8b97a5" strokeWidth="2" />
            <circle cx="21.500" cy="13.500" r="2" stroke="#1a90dc" strokeWidth="1.500" />
            <circle cx="13.500" cy="21.500" r="2" stroke="#1a90dc" strokeWidth="1.500" />
          </svg>
        </Task>
        <Task lit mark="open">
          <div className="flex h-[21px] w-[21px] items-center justify-center rounded bg-[#001d34] text-[11.500px] font-bold text-[#31a0f5]">Ps</div>
        </Task>
      </div>
      <Chevron dir="up" size={11} className="ml-auto" />
      <div className="ml-5 flex w-[23px] flex-col items-center text-[11.500px] leading-4">
        <T w={23}>ENG</T>
        <T w={11}>IN</T>
      </div>
      <svg width="16" height="16" viewBox="0 0 16 16" className="ml-[18px]" fill="none" stroke="currentColor" strokeWidth="1.200">
        <path d="M10 1.500H1V12h11V7.500M3.500 15h6M6.500 12v3M12 1h3.500v4.500h-4V1zM13.500 5.500v7" />
      </svg>
      <svg width="16" height="16" viewBox="0 0 16 16" className="ml-2" fill="none" stroke="currentColor" strokeWidth="1.100">
        <path d="M1 6h2.500L7.500 2.500v11L3.500 10H1zM9 6q1.500 2 0 4M11 4.500q2.600 3.500 0 7M13 3q3.800 5 0 10" />
      </svg>
      <svg width="17" height="16" viewBox="0 0 17 16" className="ml-2" fill="none" stroke="currentColor" strokeWidth="1.200">
        <path d="M5 4h8q1.500 0 1.500 1.500v6Q14.500 13 13 13H2.500Q1 13 1 11.500V8M16 6.500v4" />
        <path d="M5 6h8v5.500H3V9zM3.500 0 .5 5H3L2 8.500 6 3.500H3.500z" fill="currentColor" stroke="none" />
      </svg>
      <div className="-mt-0.5 ml-4 flex w-[95px] flex-col items-end leading-4">
        <T w={50}>07:24 PM</T>
        <T w={95}>Tue, 13-Feb-2024</T>
      </div>
      <svg width="14" height="16" viewBox="0 0 14 16" className="ml-2 mr-[21px]" fill="#a9dbe6">
        <path d="M7 .5q5 0 5 5.500V10l1.500 2.500H.5L2 10V6Q2 .5 7 .5zM5 13.500h4Q8.500 15.500 7 15.500T5 13.500z" />
      </svg>
    </div>
  );
}

export default function App() {
  return (
    <div className="relative flex h-[1080px] w-[1920px] flex-col overflow-hidden bg-[#272c2e] font-['Open_Sans','Noto_Sans',sans-serif]">
      <TabStrip />
      <Toolbar />
      <BookmarkBar />
      <div className="flex min-h-0 flex-1 flex-col overflow-hidden">
        <ExtensionsPage />
      </div>
      <FolderDialog />
      <div className="relative flex shrink-0 flex-col"><Taskbar /></div>

      <div className="absolute left-0 top-[161px] h-20 w-[164px] border-[15px] border-[#facc15]" />
      <div className="absolute left-[452px] top-[848px] h-[107px] w-[863px] border-[15px] border-[#facc15]" />
      <div className="absolute left-[414px] top-[184px] flex flex-col items-start text-[70.500px] font-bold leading-[89.500px] text-[#facc15] [-webkit-text-stroke:1.3px_#facc15]">
        <T w={1397}>Step #4 Choose load unpacked extensions</T>
        <T w={793}>and paste the repo path</T>
      </div>
    </div>
  );
}
